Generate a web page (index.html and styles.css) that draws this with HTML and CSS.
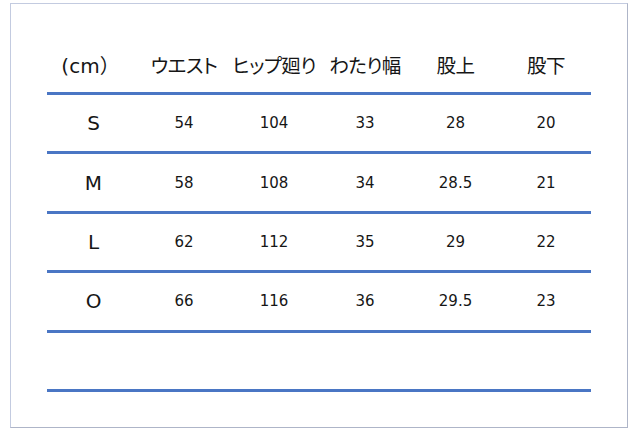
FILE: index.html
```html
<!DOCTYPE html>
<html lang="ja">
<head>
<meta charset="utf-8">
<link rel="stylesheet" href="styles.css">
</head>
<body>
<div class="frame">
  <div class="table">
    <div class="row head">
      <div class="c c1">(cm）</div>
      <div class="c c2">ウエスト</div>
      <div class="c c3">ヒップ廻り</div>
      <div class="c c4">わたり幅</div>
      <div class="c c5">股上</div>
      <div class="c c6">股下</div>
    </div>
    <div class="row">
      <div class="c c1 size">S</div>
      <div class="c c2">54</div>
      <div class="c c3">104</div>
      <div class="c c4">33</div>
      <div class="c c5">28</div>
      <div class="c c6">20</div>
    </div>
    <div class="row">
      <div class="c c1 size">M</div>
      <div class="c c2">58</div>
      <div class="c c3">108</div>
      <div class="c c4">34</div>
      <div class="c c5">28.5</div>
      <div class="c c6">21</div>
    </div>
    <div class="row">
      <div class="c c1 size">L</div>
      <div class="c c2">62</div>
      <div class="c c3">112</div>
      <div class="c c4">35</div>
      <div class="c c5">29</div>
      <div class="c c6">22</div>
    </div>
    <div class="row">
      <div class="c c1 size">O</div>
      <div class="c c2">66</div>
      <div class="c c3">116</div>
      <div class="c c4">36</div>
      <div class="c c5">29.5</div>
      <div class="c c6">23</div>
    </div>
    <div class="row empty"></div>
  </div>
</div>
</body>
</html>
```

FILE: styles.css
```css
html, body {
  margin: 0;
  padding: 0;
  background: #ffffff;
}

body {
  width: 640px;
  height: 434px;
  overflow: hidden;
  font-family: "DejaVu Sans", "Noto Sans CJK JP", sans-serif;
  color: #161616;
}

.frame {
  box-sizing: border-box;
  margin: 3px 0 0 10px;
  width: 618px;
  height: 425px;
  border: 1px solid #c3cbe0;
  border-right-color: #aeb5c8;
  border-bottom-color: #aeb5c8;
  padding: 0 0 0 36px;
}

.table {
  width: 544px;
  display: flex;
  flex-direction: column;
}

.row {
  display: flex;
  align-items: center;
  box-sizing: border-box;
  height: 59.4px;
  border-bottom: 3px solid #4a76c4;
  font-size: 15px;
}

.row.head {
  height: 91px;
  padding-top: 32px;
  font-family: "Noto Sans CJK JP", sans-serif;
  font-feature-settings: "palt";
  font-size: 19.5px;
  letter-spacing: -0.6px;
  color: #161616;
}

.c {
  text-align: center;
  white-space: nowrap;
}

.c1 { width: 93px; }
.c2 { width: 88px; }
.c3 { width: 92px; }
.c4 { width: 90px; }
.c5 { width: 91px; }
.c6 { width: 90px; }

.head .c1 {
  box-sizing: border-box;
  padding-right: 6px;
  font-family: "DejaVu Sans", "Noto Sans CJK JP", sans-serif;
  font-size: 20px;
  letter-spacing: 0;
  font-feature-settings: normal;
}

.size {
  font-size: 20px;
}
```
